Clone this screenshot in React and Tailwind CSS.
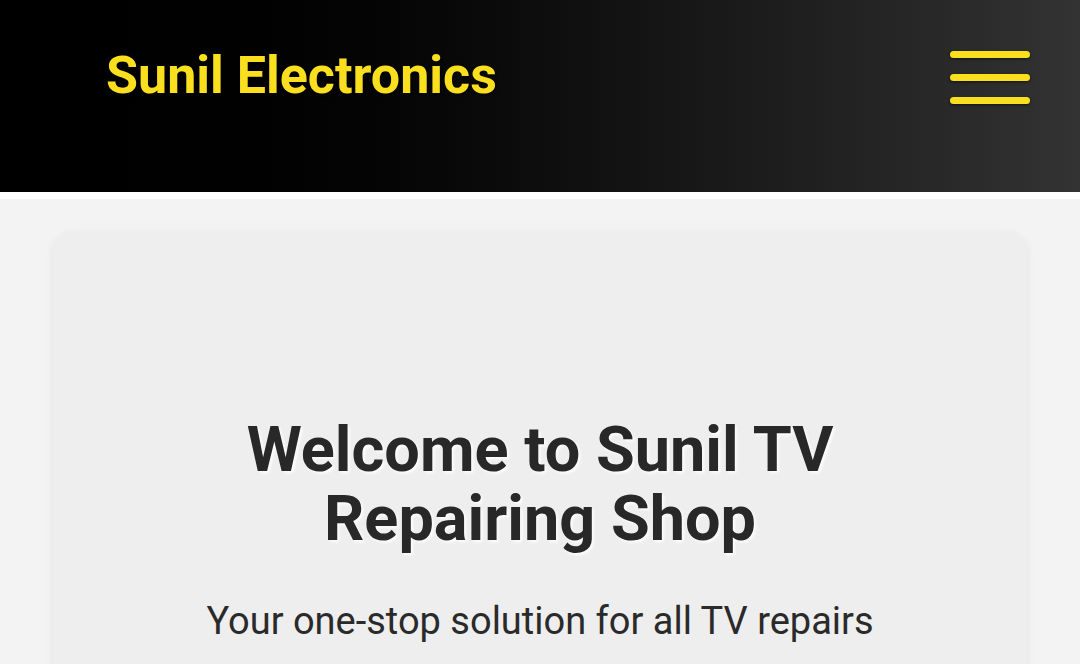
export default function App() {
  return (
    <div className="h-[664px] bg-[#f3f3f3] overflow-hidden" style={{ fontFamily: 'Roboto, "Liberation Sans", sans-serif' }}>
      <header className="h-[199px] bg-gradient-to-r from-[#000000] to-[#333333] border-b-[7px] border-white flex items-start justify-between pl-[106px] pr-[50px] pt-[46px]">
        <h1 className="text-[52px] leading-[60px] font-bold text-[#fadf1e]" style={{ textShadow: '1px 1px 3px rgba(0,0,0,0.8)' }}>
          Sunil Electronics
        </h1>
        <button className="flex flex-col gap-[16px] pt-[5px]">
          <span className="block w-[80px] h-[7px] rounded-full bg-[#fadf1e] shadow-[0_1px_3px_rgba(0,0,0,0.6)]" />
          <span className="block w-[80px] h-[7px] rounded-full bg-[#fadf1e] shadow-[0_1px_3px_rgba(0,0,0,0.6)]" />
          <span className="block w-[80px] h-[7px] rounded-full bg-[#fadf1e] shadow-[0_1px_3px_rgba(0,0,0,0.6)]" />
        </button>
      </header>
      <main className="px-[53px] pt-[33px]">
        <section className="bg-[#eeeeee] rounded-[20px] shadow-[0_2px_8px_rgba(0,0,0,0.07)] pt-[183px] pb-[60px] px-[40px] text-center">
          <h2 className="text-[63px] leading-[69px] font-bold text-[#282828] max-w-[620px] mx-auto" style={{ textShadow: '2px 2px 3px rgba(255,255,255,0.9)' }}>
            Welcome to Sunil TV Repairing Shop
          </h2>
          <p className="mt-[46px] text-[38px] leading-[44px] text-[#2a2a2a]">
            Your one-stop solution for all TV repairs
          </p>
        </section>
      </main>
    </div>
  );
}
